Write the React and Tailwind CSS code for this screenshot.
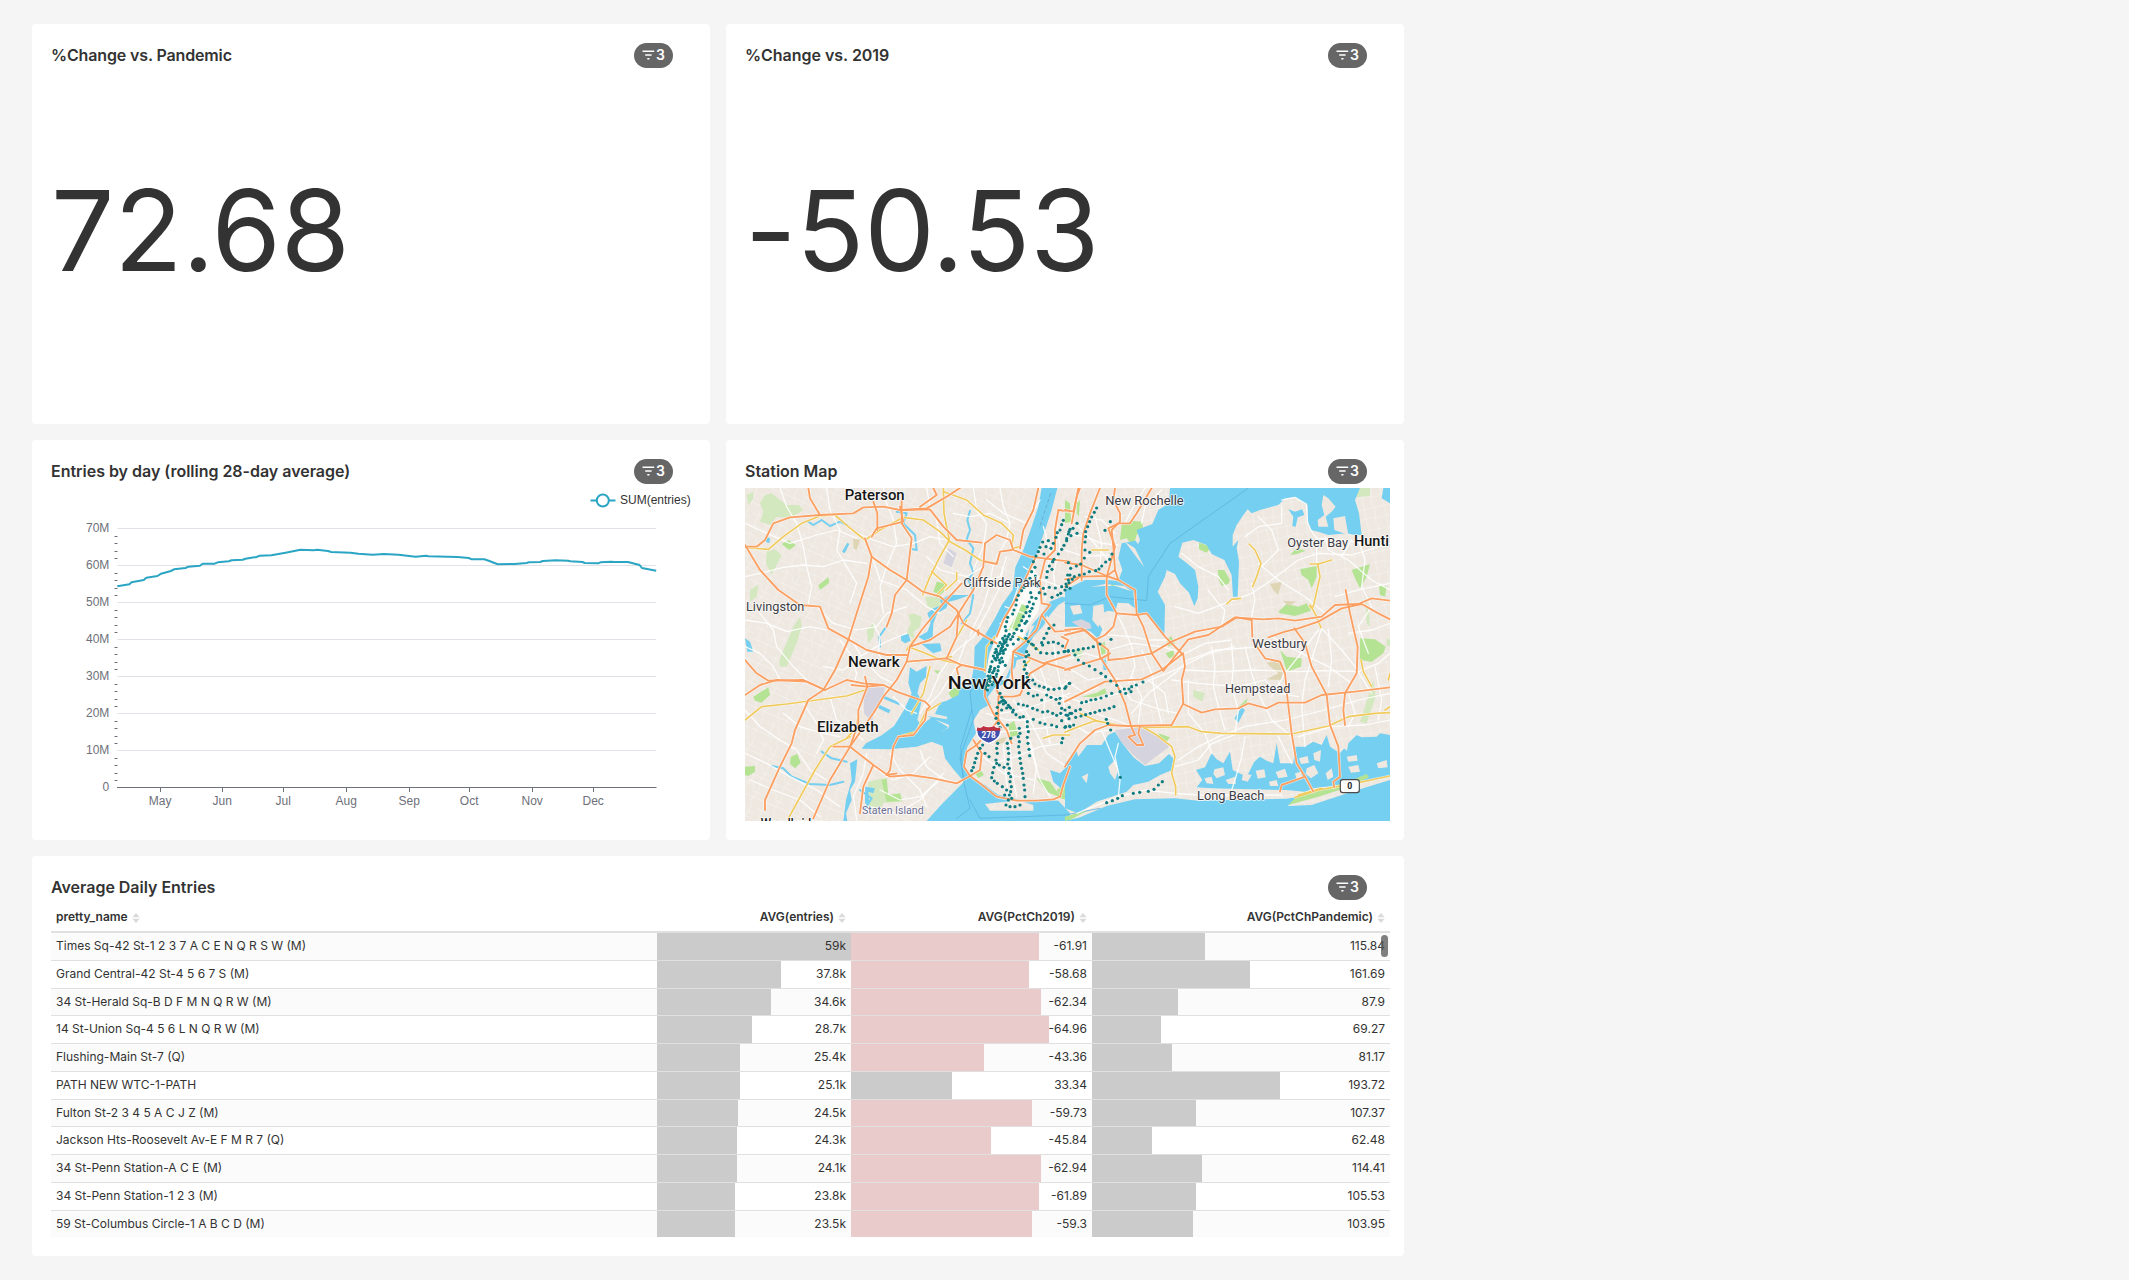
import React from "react";

function FilterBadge() {
  return (
    <div className="flex h-[25px] w-[39px] items-center justify-center rounded-full bg-[#666] pb-[2px] text-[14px] font-semibold leading-none text-white">
      <svg width="13" height="10" viewBox="0 0 13 10" className="mr-px">
        <path d="M0.5 1.3H12.2M3.2 5H9.6M5.3 8.7H7.5" stroke="#fff" strokeWidth="1.4" fill="none" />
      </svg>
      <span>3</span>
    </div>
  );
}

function Card({ title, wide, tight, children }) {
  return (
    <section className={`flex h-[400px] flex-col overflow-hidden rounded bg-white pl-[19px] pr-[14px] pt-[19px] ${wide ? "col-span-2" : ""}`}>
      <header className="mr-[23px] flex h-[25px] shrink-0 items-center justify-between">
        <h2 className={`pb-px text-[16px] font-semibold leading-5 text-[#333] ${tight ? "tracking-[-0.14px]" : "tracking-[-0.02px]"}`}>{title}</h2>
        <FilterBadge />
      </header>
      {children}
    </section>
  );
}

function BigNumber({ value }) {
  return (
    <div className="mt-[94px] whitespace-nowrap text-[112px] leading-[136px] tracking-[-0.2px] text-[#333]">{value}</div>
  );
}

/* ---------- line chart ---------- */

const series = [
  [218, 469], [245, 463], [250, 457], [277, 450], [283, 443], [308, 438], [316, 431], [338, 423], [345, 418], [371, 414],
  [377, 410], [403, 407], [409, 401], [436, 401], [443, 397], [468, 394], [474, 391], [499, 389], [505, 386], [530, 381],
  [537, 377], [563, 376], [595, 368], [628, 359], [658, 361], [665, 359], [690, 363], [697, 366], [740, 368], [758, 371],
  [790, 374], [815, 372], [848, 374], [886, 380], [910, 377], [915, 379], [980, 381], [1005, 384], [1012, 388], [1040, 388],
  [1050, 392], [1070, 403], [1108, 402], [1135, 399], [1140, 397], [1165, 396], [1171, 393], [1200, 391], [1228, 392],
  [1233, 394], [1260, 396], [1265, 399], [1295, 400], [1300, 397], [1325, 395], [1330, 396], [1362, 396], [1388, 405],
  [1393, 414], [1425, 422],
];
const months = [["May", 160.5], ["Jun", 222.5], ["Jul", 283.5], ["Aug", 346.5], ["Sep", 409.5], ["Oct", 469.5], ["Nov", 532.5], ["Dec", 593.5]];

function LineChart() {
  const points = series.map(([x, y]) => `${(20 + x / 2.24).toFixed(1)},${(430 + y / 3).toFixed(1)}`).join(" ");
  return (
    <svg width="645" height="333" viewBox="51 488 645 333" className="mt-1 shrink-0" fontFamily="Liberation Sans, Arial, sans-serif" fontSize="12">
      {[0, 1, 2, 3, 4, 5, 6, 7].map((i) => {
        const y = Math.round(787.3 - i * 37) + 0.5;
        return (
          <g key={i}>
            {i > 0 && <path d={`M117.5 ${y}H656`} stroke="#E0E2E8" />}
            <text x="109.3" y={y + 3.8} textAnchor="end" fill="#6E7079">{i ? `${i}0M` : "0"}</text>
            {i < 7 && [1, 2, 3, 4].map((k) => (
              <path key={k} d={`M114.5 ${Math.round(y - k * 7.4) + 0.5}H117.5`} stroke="#6E7079" />
            ))}
          </g>
        );
      })}
      <path d="M117 787.5H656.5" stroke="#6E7079" />
      {months.map(([m, x]) => (
        <g key={m}>
          <path d={`M${x} 788V792`} stroke="#6E7079" />
          <text x={x - 0.3} y="805" textAnchor="middle" fill="#6E7079">{m}</text>
        </g>
      ))}
      <polyline points={points} fill="none" stroke="#2BA5C4" strokeWidth="2" strokeLinejoin="round" />
      <path d="M590.5 500.5H615.5" stroke="#2BA5C4" strokeWidth="2" />
      <circle cx="602.8" cy="500.5" r="6" fill="#fff" stroke="#2BA5C4" strokeWidth="2" />
      <text x="620" y="504.3" fill="#333">SUM(entries)</text>
    </svg>
  );
}

/* ---------- station map ---------- */

const LAND = "#EEE8E1";
const WATER = "#74CFF0";
const GREEN = "#B4E394";
const PALE = "#D3E8BE";
const AIR = "#D5D4DE";
const SAND = "#DDD5B4";

const westWater = [
  "905,24 952,24 935,90 915,150 885,235 858,300 828,360 792,412 768,470 748,520 738,580 734,630 752,672 720,690 700,722 708,760 682,800 670,850 690,890 735,915 775,945 840,960 735,972 750,992 880,992 880,975 850,965 905,958 955,962 990,1000 990,1023 560,1023 600,978 672,905 642,870 615,835 608,798 575,785 530,800 450,808 365,806 378,790 425,766 462,738 492,690 515,640 505,610 510,562 530,575 560,558 558,592 540,610 532,640 545,662 532,720 545,735 575,712 625,742 628,735 560,708 620,718 622,710 585,702 600,668 620,662 655,645 660,628 692,612 702,560 704,500 735,465 765,415 785,375 818,330 826,262 850,210 875,140 895,80",
  "990,355 955,375 930,405 908,440 880,470 860,505 852,535 830,540 826,560 812,578 800,610 765,622 740,655 736,640 760,605 795,600 812,560 818,520 842,500 852,470 880,430 905,400 930,365 965,350",
  "562,400 580,385 605,375 600,360 628,345 690,345 655,358 628,365 618,385 592,400 580,430 578,470 555,482 535,470 562,455 572,430",
  "482,465 505,462 512,482 495,490 484,482",
  "545,492 600,490 605,512 580,520 560,505",
  "415,640 480,668 478,676 420,652", "412,672 452,690 446,700 410,682",
  "15,475 30,485 40,515 22,515", "78,170 90,175 88,190 78,186",
  "306,215 322,188 328,192 314,220",
  "930,870 940,905 962,925 980,900 990,890 990,850 960,880",
  "330,850 352,838 345,905 330,930 335,960 318,1000 322,1023 310,1023 318,960 335,900",
  "376,920 405,925 400,940 385,935 388,975 375,970", "715,530 738,520 735,560 700,600 690,640 702,670 716,640 720,600",
];
const eastWater = [
  "315,24 885,24 870,60 882,100 890,165 870,165 845,160 790,165 760,155 738,150 728,120 728,75 715,68 690,52 660,55 640,75 585,90 560,100 548,88 535,105 515,135 503,165 503,200 520,180 515,205 522,245 518,350 504,350 500,285 478,240 440,222 425,195 385,180 352,188 340,230 360,245 390,270 400,320 398,355 388,378 372,338 345,310 330,282 305,270 300,290 278,335 300,375 298,470 252,405 215,400 208,340 178,318 120,312 60,325 0,345 0,330 60,300 120,300 160,302 172,270 160,235 170,190 212,182 240,225 232,260 215,200 225,180 215,150 262,132 280,90 312,70",
  "0,338 60,322 120,318 150,318 205,335 210,385 190,370 158,368 150,395 128,392 90,412 112,448 100,478 78,455 40,440 0,440",
  "670,88 690,95 712,88 718,105 698,112 692,140 682,138 685,110",
  "0,850 50,795 110,795 130,765 150,755 172,790 205,832 240,858 282,850 312,822 325,835 322,870 285,885 250,905 205,915 185,935 95,965 40,1000 0,985",
  "45,1012 125,978 210,958 330,955 400,962 665,956 700,950 668,978 740,975 860,935 975,900 975,1023 0,1023",
  "393,870 420,862 440,820 455,838 475,850 495,815 503,870 545,890 568,845 585,830 605,842 625,850 635,790 645,850 685,850 690,800 720,800 745,785 770,795 785,765 795,800 825,820 850,790 875,765 890,772 935,770 945,760 975,765 975,888 890,903 800,918 745,925 720,935 665,930 560,928 440,925 395,922 412,900",
  "955,24 975,24 975,70 950,55",
  "508,715 530,682 540,690 520,728", "112,540 122,530 126,570 116,570",
];
const westLandIslands = ["920,405 935,425 915,425", "870,440 885,435 860,480", "985,380 1020,375 1025,402 1000,405", "600,755 625,745 628,738 615,750"];
const eastLandIslands = [
  "770,75 775,45 790,55 812,80 800,95 782,110 790,140 760,140 758,120 778,105", "805,115 840,108 850,165 808,150", "15,378 45,374 52,400 25,404", "85,378 115,372 118,400 100,442 82,420", "180,185 210,205 238,262 225,245",
  "130,860 150,840 160,870 150,900 135,880", "50,890 70,880 65,910", "30,800 70,790 40,830",
  "448,868 475,862 480,885 455,895 445,882", "482,900 510,890 512,912 490,912", "535,880 560,885 548,905 530,900", "572,872 598,868 602,892 578,896", "632,876 660,866 668,890 640,895",
  "612,905 635,900 640,918 615,918", "702,835 728,828 732,848 708,852", "725,865 748,855 760,880 738,895 722,882", "745,820 768,810 765,845 748,840", "782,880 800,865 805,890 788,900",
  "845,830 875,825 878,842 850,845", "850,860 880,855 885,875 858,878", "935,850 965,840 968,862 940,865", "690,880 708,875 712,895 694,895", "830,800 850,790 846,812", "418,895 440,890 445,912 425,910",
];
const westGreen = [
  ["60,70 75,45 95,40 120,60 140,75 175,75 190,90 150,115 110,110 90,135 60,125 70,95", PALE],
  ["80,215 105,208 125,225 95,285 78,250", PALE], ["125,192 145,180 168,195 148,210", GREEN], ["235,315 265,292 268,308 240,330", GREEN],
  ["118,540 160,440 180,410 185,440 170,490 140,560 120,560", PALE], ["40,650 85,622 90,645 65,668 45,662", GREEN],
  ["580,335 590,305 615,310 612,335 600,345", GREEN], ["555,350 605,350 600,380 565,385", PALE], ["520,400 545,410 540,440 520,455 525,480 500,460 512,430 505,405", PALE],
  ["380,450 405,425 400,470 385,490", PALE], ["625,640 640,625 690,620 640,660", GREEN],
  ["805,735 822,722 835,765 812,772", GREEN], ["385,905 430,895 445,950 480,940 488,965 430,968 418,1000 380,985", PALE], ["15,860 45,858 45,875 25,888 15,885", GREEN],
  ["425,900 440,895 445,945 480,940 486,962 440,965", GREEN],
  ["152,830 172,822 182,848 165,865 150,852", GREEN], ["890,895 930,905 965,955 920,935", GREEN], ["950,930 990,905 990,962 960,955", GREEN],
  ["975,90 990,85 990,120 978,125", GREEN], ["705,880 722,870 732,885 715,895", GREEN], ["340,175 360,180 350,210 340,205", SAND], ["765,780 800,770 790,790 765,792", SAND],
  ["30,330 55,315 50,350 30,365", PALE], ["20,45 40,35 40,55 25,75", PALE], ["582,570 600,572 592,582", GREEN],
  ["610,250 625,205 650,220 635,262", AIR], ["370,640 380,622 435,622 430,650 405,690 395,725 372,700", AIR],
];
const eastGreen = [
  ["170,135 200,122 232,125 235,150 215,165 205,200 185,175 165,180", GREEN], ["0,60 15,70 18,125 0,130", GREEN], ["35,70 45,60 42,110 35,100", GREEN],
  ["402,188 440,200 425,218 402,208", GREEN], ["458,270 478,270 495,300 490,312 470,318 462,300", GREEN], ["640,395 665,372 700,380 725,370 738,392 690,408 645,400", GREEN],
  ["615,312 650,305 640,345 625,330", SAND], ["655,362 695,365 670,378", SAND], ["860,270 915,252 905,290 885,325 870,295", GREEN], ["870,24 915,24 915,48 870,52", PALE],
  ["942,315 965,320 960,350 945,345", GREEN], ["900,350 912,400 915,440 905,430", PALE], ["705,268 755,258 755,290 740,325 730,300 710,285", GREEN], ["675,225 695,205 722,212 695,222", GREEN],
  ["885,475 930,478 962,500 955,520 920,545 885,540", GREEN], ["645,510 665,530 710,535 708,560 665,575 655,540", GREEN], ["605,550 640,538 655,555 650,600 605,598 640,580", SAND],
  ["925,600 932,650 905,730 885,725 900,680", PALE], ["280,760 315,772 305,785 290,780", GREEN], ["385,630 420,640 412,665 385,650", PALE], ["305,480 318,468 330,490 310,500", GREEN],
  ["302,520 325,510 328,530 312,535", GREEN], ["50,650 95,638 120,625 125,640 90,652", GREEN], ["0,905 25,900 38,965 0,970", GREEN], ["128,870 138,840 150,875", PALE],
  ["135,320 145,308 150,325 138,335", GREEN], ["105,492 120,485 122,520 110,525", GREEN], ["20,510 55,505 50,530 28,535", PALE], ["520,680 548,655 545,668 530,680", GREEN],
  ["20,425 50,418 75,430 80,445 55,450", AIR], ["150,750 235,740 290,775 312,800 240,855 205,825 168,785", AIR], ["965,475 975,480 975,500 965,495", PALE],
];
const westWhite = [
  "15,130 80,160 150,190 230,165 290,150 350,175", "15,290 60,280 130,262 190,255 250,260 310,240 380,250", "120,24 140,80 170,130 190,200 200,260 215,320 205,370",
  "260,24 270,90 300,150 290,210 320,260 350,310 330,370", "430,24 440,70 460,120 470,190 440,260 420,320 430,400", "330,150 400,180 460,200 520,190 570,170 620,180",
  "400,240 420,300 500,330 560,380 600,400", "15,420 80,430 140,455 210,440 260,450", "15,500 60,520 100,560 120,600", "60,400 100,450 110,500 160,560 200,600", "230,380 280,430 350,450 410,440 440,400 500,380",
  "330,470 370,540 420,590 460,610", "250,560 310,570 360,530 410,500 450,480 500,460", "400,430 420,470 415,520 440,560", "300,480 330,520 350,580 340,620", "15,690 60,740 120,780 170,810 210,870 260,900",
  "15,820 80,850 150,890 230,930 300,980", "30,900 100,930 180,960 240,1010", "130,700 180,740 250,760 300,770", "190,670 230,730 250,780 230,820", "270,650 290,720 340,760 370,780",
  "380,820 370,880 340,950 350,1020", "400,860 460,900 520,880 570,830", "450,820 480,870 540,930 560,980", "420,930 480,960 540,950 600,900", "390,980 470,1000 540,960 610,880", "540,810 560,860 600,890 640,910",
  "560,24 570,80 590,120 600,190 640,230", "700,24 710,90 740,130 730,200 700,270", "780,24 790,80 810,130 800,180 770,230", "740,60 790,100 860,130 900,60", "640,100 690,110 750,100 810,130", "650,300 690,320 740,300 780,290 800,230",
  "560,230 600,270 680,290 730,260", "760,250 750,310 730,380 700,440 690,470", "790,260 780,320 740,400 700,470", "700,470 640,520 600,580 570,650 540,700", "680,480 650,560 600,640 560,680", "460,650 500,690 530,700",
  "835,320 800,420 775,500", "860,330 820,430 790,520 770,590", "890,350 850,430 820,500 780,570", "780,430 860,470", "795,380 880,410", "770,500 830,530", "850,260 910,300 960,320 990,310", "910,140 930,210 920,290 915,360", "950,120 960,200 940,280 950,350",
  "820,660 850,700 870,800 900,900 930,950", "840,660 880,740 920,820 980,860", "780,700 850,690 930,660 990,640", "740,700 800,720 880,720 990,700", "750,760 840,750 960,740", "760,850 830,830 900,800 970,790", "730,830 790,880 880,900",
  "810,790 815,870 830,950", "790,790 795,860 805,950", "870,780 890,860 880,940", "900,560 920,620 910,700 930,790", "860,560 890,600 950,630 990,600", "940,480 950,560 970,650 980,760", "860,620 920,640 990,670",
];
const eastWhite = [
  "0,160 60,170 110,190 160,195", "0,210 60,230 130,225", "30,130 80,180 130,240", "90,110 110,190 105,260", "60,110 110,120 150,160", "240,24 200,90 180,130", "290,30 240,80 230,130",
  "130,465 200,470 250,480 310,480", "130,510 200,490 290,500 360,520 420,490 500,480", "160,410 180,450 200,500 210,560 190,610", "0,540 60,520 130,540", "20,570 70,600 120,590 180,600", "0,600 60,640 100,620", "0,650 60,670 160,640 230,610 330,570 430,520 510,500",
  "160,610 200,660 290,690 340,700", "200,700 250,640 330,580 370,540 450,510 600,500", "220,730 230,650 200,590", "290,730 270,650 260,580 230,510", "250,600 300,640 310,700", "320,600 400,610 520,620 600,600", "360,570 460,575 560,570 700,575 780,572 880,575",
  "370,600 370,700 420,760 440,820", "440,500 450,560 445,620 460,680 480,750", "500,490 505,560 500,620 520,690 510,760", "540,500 560,580 580,640 620,720 680,770", "600,600 640,640 700,650", "620,470 690,510 790,560 860,610", "760,450 700,530 660,580 620,650", "770,445 720,600 710,680 720,800",
  "770,445 830,510 870,560 920,640", "790,450 800,540 790,620", "430,330 460,370 480,390 470,440", "330,380 400,400 480,370 560,340 620,300 700,240 760,220 860,225 975,190", "560,310 570,360 560,410", "580,250 640,300 720,350 780,400", "650,60 690,52 724,72 728,130 742,158 755,175 755,250", "755,175 830,180 900,190",
  "580,110 620,150 640,210 590,260", "780,170 790,210 850,240 920,300 975,330", "350,220 400,260 460,290 490,330", "650,80 650,130 580,140 540,170", "810,350 880,330 975,310", "880,180 900,240 890,320 920,380 880,440 910,520", "850,460 920,450 975,430", "880,575 940,550 975,520",
  "340,840 400,800 460,770 540,740 660,720 780,690 880,660 975,640", "330,860 400,840 440,790 520,760", "540,770 530,830 510,900 500,930", "700,770 800,740 900,735 975,720", "640,770 680,850", "160,790 150,830 165,900 160,950", "110,750 130,800 155,860", "35,1000 160,950 240,930 330,940 400,945 650,945", "0,720 70,760 130,750", "60,690 150,720 190,735", "850,640 870,700 850,740", "930,560 950,660 940,720", "830,230 860,180",
];
const westYellow = [
  "15,203 85,208 130,170 185,130 240,108 285,105 325,140 375,180 400,235 450,270 500,300", "375,180 420,150 490,112 550,120 600,155 630,185 675,210 720,240 770,250",
  "610,24 612,100 628,180 600,230 570,290 548,345", "612,35 680,60 730,105 785,130 820,165 815,205 840,200", "575,275 620,315 590,345", "650,278 650,300 618,330", "620,535 640,490 680,420", "570,560 550,640 515,700",
  "505,500 545,515 605,540 670,555 735,570", "635,530 560,540 510,545", "15,720 65,680 140,672 230,660 320,648 375,630", "330,770 270,800 225,870 145,1015", "355,700 350,740 320,775", "555,700 530,755 475,770", "765,470 740,500 735,575", "835,470 870,490 895,510", "600,670 560,695", "990,765 940,765 910,775", "870,540 850,560", "520,480 500,510",
];
const eastYellow = [
  "552,192 570,210 588,250 575,290 563,320", "485,372 500,358 527,355", "735,252 760,252 800,240", "758,252 765,290 745,380 735,380", "735,375 750,400 768,443", "80,210 130,210",
  "0,757 40,740 90,722 160,735 235,742 370,740 410,755 470,760 680,762 790,738 850,710 930,700 975,698", "45,700 100,725", "235,742 275,765 320,800 330,830 320,880 332,920 332,945", "888,540 895,575 920,620", "975,580 970,600", "960,690 975,680", "690,952 760,930 870,910 975,888", "700,945 770,925",
];
const westOrange = [
  "15,200 50,200 75,180 100,130 150,112 240,105 340,100 370,82 430,80 480,90 560,85 620,50 660,24", "205,24 210,55 240,105", "15,195 60,270 115,330 180,375 240,380 265,445 325,478 380,510 440,525 500,525",
  "375,175 395,230 385,290 350,400 325,480 285,570 250,630 205,660 165,750 155,790 120,860 75,960 75,990", "15,540 50,580 85,602 190,600 255,630 320,600 370,610 430,615", "15,645 60,615 110,600 200,605 255,630",
  "400,65 412,100 412,150", "480,80 490,125 410,145 395,170", "485,60 485,130 515,175 500,300 465,345 455,400 440,440", "580,24 590,45 540,80", "490,90 570,88 610,140 650,180 725,188",
  "395,230 450,270 500,300 548,335 600,350 650,390 670,430 770,490", "665,310 610,370 545,450 510,500 500,545 470,600 430,650 400,700 330,800 270,900 220,1015", "510,500 570,480 630,440 700,330 730,260 735,190 770,165 810,180 820,210 870,230 990,245",
  "735,245 770,252 780,215 815,210", "500,545 620,535 665,555 735,570", "620,535 650,470 655,400", "665,555 650,565 655,585", "375,590 382,620 355,690 355,730 330,800", "430,615 380,620 335,615", "430,615 470,635 555,665 570,680 560,690 555,720 520,765 475,770 460,800 450,870 440,885",
  "280,800 330,800 400,855 450,890 510,885 580,895 650,910 690,888 720,910 770,950 830,962 890,962 940,958 960,950 970,915 990,860", "400,855 370,920 360,1000", "470,880 440,885",
  "690,888 672,860 680,815 710,795 760,740 775,720 775,650 820,650 840,645 870,580 920,550 990,570", "735,620 735,650 760,700 800,750 815,790", "700,780 725,820 720,870 690,888", "895,24 880,90 850,150 840,205",
  "885,235 850,310 820,370 790,420 770,470", "990,95 955,90 945,150 945,210 915,240 900,300 905,370 930,375 905,405 890,450 850,490 820,515 815,570 820,620", "820,515 860,530 910,550 990,525", "905,405 945,455 990,452", "965,470 985,480 975,505", "715,465 715,450", "780,650 770,630",
];
const eastOrange = [
  "40,24 30,80 20,130", "0,90 25,95 35,50 45,24", "105,24 75,100 55,160 50,210 50,300", "150,24 145,60 165,100 165,125 140,150 145,200 150,270", "260,24 215,100 195,130 160,130 130,145 150,200 125,290",
  "0,248 50,255 125,288 160,300 210,330 215,400", "0,298 50,290 125,288 150,270 160,300", "0,320 40,295", "125,288 125,345 155,400 145,440 120,465 90,480 60,450 0,465", "155,400 215,405 245,400 300,470 355,525 360,560 350,600 355,670 320,735 190,738 130,735",
  "215,400 235,440 260,520 295,573 370,478 430,465 510,412 595,418 640,415 690,422 770,410 810,375 880,372 920,355 975,362", "0,450 50,445 95,480 105,530 150,600 180,670 198,738", "90,480 130,510 130,540 180,535 260,520 320,485 390,455 470,440 515,412 560,420 562,470",
  "0,570 60,550 110,535 135,520", "0,665 60,635 120,605 230,598 290,570 355,520", "562,480 600,535 645,545 660,580 668,660 680,760 695,850 720,890 745,935", "610,472 660,455 700,445 760,425 830,385 890,372 940,400 975,418",
  "688,445 720,490 740,560 785,645 795,735 805,760 820,800 825,890 805,905 808,922", "842,330 855,400 878,500 875,580 840,640 835,690 840,735", "355,672 410,698 450,688 520,685 550,670 605,685 640,668 720,668 770,645 870,635 975,622", "0,860 45,790 90,750 130,735", "198,738 210,765 190,770 215,795 235,795 220,760 225,738", "720,890 650,915 645,935",
];
const westDots = "970,121 965,134 960,150 990,148 985,162 952,158 948,172 980,176 940,190 908,186 925,182 972,196 933,205 900,202 918,200 895,215 965,208 912,222 888,228 955,222 942,238 880,245 938,245 985,248 885,262 928,258 936,268 922,275 875,275 886,288 870,295 990,285 985,300 978,312 920,292 858,300 865,310 852,322 878,312 893,318 910,325 928,322 946,324 965,320 975,330 990,325 845,332 898,338 915,342 936,352 953,345 962,340 835,346 872,338 888,355 875,352 830,360 868,366 828,375 880,372 862,380 876,385 822,390 858,398 870,394 818,402 850,410 868,408 803,412 845,422 860,424 800,425 838,436 855,430 796,440 830,448 845,452 798,452 822,460 795,468 808,463 788,475 800,478 818,470 835,478 755,488 780,488 792,490 775,498 788,500 802,496 820,492 768,508 782,512 796,508 765,518 776,522 790,520 760,528 772,532 785,534 756,545 768,540 780,548 796,556 752,560 764,565 775,560 748,575 758,578 770,582 744,588 756,592 768,590 740,600 750,604 762,605 738,612 745,616 756,614 735,625 742,630 732,615 737,620 740,608 748,596 752,588 750,568 762,572 774,572 788,545 764,535 778,540 770,515 784,505 798,486 792,482 804,470 812,478 786,494 780,520 772,525 790,512 782,600 942,435 927,445 920,460 912,475 905,488 888,506 875,492 865,485 858,475 902,518 920,520 938,520 955,518 972,515 985,512 908,495 925,488 940,486 955,490 968,498 880,495 860,515 858,530 866,525 853,545 857,555 853,568 860,580 862,592 866,604 878,600 885,612 898,618 912,622 925,628 942,628 958,625 978,620 988,610 865,640 880,648 892,645 905,660 920,645 933,652 948,658 960,655 958,670 965,685 975,690 988,682 780,640 785,652 790,660 797,668 805,676 790,672 800,684 812,684 778,668 772,682 785,664 794,664 808,680 785,690 820,690 835,672 850,675 862,678 878,685 892,690 908,696 923,694 938,700 950,706 962,700 978,705 990,700 850,710 840,712 828,704 818,696 862,725 880,718 900,728 915,732 935,735 950,740 965,722 975,742 990,740 968,775 965,788 770,700 768,715 775,730 780,742 802,735 812,775 838,745 840,760 835,770 838,785 836,800 838,818 840,835 842,850 845,865 848,880 850,895 852,915 854,930 855,950 862,740 865,755 862,772 864,790 867,808 869,827 773,790 770,805 772,820 768,840 770,850 762,862 758,878 755,893 763,903 772,910 787,920 800,930 794,945 808,945 802,790 804,805 806,820 805,838 803,852 808,865 806,880 812,890 810,905 814,920 812,935 815,955 805,960 798,975 810,980 825,980 840,975 778,855 792,862 720,805 728,795 713,820 708,835 704,848 700,862 695,872 735,820 747,830";
const eastDots = "95,84 88,97 80,111 74,125 136,125 68,140 120,151 62,155 62,170 60,186 60,210 74,217 58,234 141,222 134,238 122,246 36,130 24,145 12,155 36,160 18,167 5,182 47,252 34,258 17,265 110,258 102,267 92,272 73,275 58,282 43,285 28,290 22,298 8,285 12,308 5,320 138,478 105,492 85,500 70,504 55,506 40,509 25,512 10,514 0,514 30,525 40,540 56,550 73,558 90,569 108,580 122,590 137,603 155,616 234,606 214,615 200,620 192,627 178,627 198,635 182,640 165,635 140,640 124,648 108,654 92,658 78,660 64,665 50,668 14,610 0,625 147,680 133,685 118,690 104,692 90,697 76,700 62,704 48,708 32,712 12,716 46,688 32,692 20,700 8,706 26,735 14,738 2,740 124,718 128,730 137,750 166,892 292,905 280,915 267,928 250,934 224,937 205,940 172,947 158,955 142,962 125,968";

function Shapes({ list, fill }) {
  return list.map((p, i) => <polygon key={i} points={p} fill={fill} />);
}
function Lines({ list, stroke, width, opacity }) {
  return list.map((p, i) => (
    <polyline key={i} points={p} fill="none" stroke={stroke} strokeWidth={width} opacity={opacity} strokeLinejoin="round" strokeLinecap="round" />
  ));
}
function Dots({ list }) {
  return list.split(" ").map((p, i) => {
    const [x, y] = p.split(",");
    return <circle key={i} cx={x} cy={y} r="4.8" fill="#0E7C80" />;
  });
}
function Terrain({ water, islands, green }) {
  return (
    <>
      {green.filter((g) => g[1] !== AIR).map(([p, c], i) => <polygon key={i} points={p} fill={c} />)}
      <Shapes list={water} fill={WATER} />
      <Shapes list={islands} fill={LAND} />
      {green.filter((g) => g[1] === AIR).map(([p, c], i) => <polygon key={i} points={p} fill={c} />)}
    </>
  );
}
function Roads({ white, yellow, orange }) {
  return (
    <>
      <Lines list={white} stroke="#fff" width="3.8" opacity="0.9" />
      <Lines list={yellow} stroke="#fff" width="8" opacity="0.7" />
      <Lines list={yellow} stroke="#F1CA5C" width="5" />
      <Lines list={orange} stroke="#fff" width="9" opacity="0.7" />
      <Lines list={orange} stroke="#FB9F62" width="5.6" />
    </>
  );
}

function Label({ x, y, size, w, bold, color = "#3B3B44", children }) {
  return (
    <text x={x} y={y} fontSize={size} textLength={w} lengthAdjust="spacingAndGlyphs" fontWeight={bold ? 500 : 400} fill={bold ? "#151515" : color}
      stroke="#fff" strokeWidth="5" strokeOpacity="0.8" paintOrder="stroke" strokeLinejoin="round">{children}</text>
  );
}

function StationMap() {
  return (
    <svg width="645" height="333" viewBox="15 24 1935 999" className="mt-1 shrink-0" fontFamily="Roboto, Noto Sans, sans-serif">
      <defs>
        <pattern id="streets" width="74" height="62" patternUnits="userSpaceOnUse" patternTransform="rotate(24)">
          <path d="M0 12H40L46 30H74M20 0V40L34 62M58 0V24L50 62M0 46H74" fill="none" stroke="#fff" strokeWidth="1.6" opacity="0.5" />
        </pattern>
        <pattern id="eastStreets" width="60" height="66" patternUnits="userSpaceOnUse" patternTransform="rotate(-12)">
          <path d="M0 14H60M0 44H36L60 50M14 0V66M44 0V30L38 66" fill="none" stroke="#fff" strokeWidth="1.6" opacity="0.5" />
        </pattern>
      </defs>
      <rect x="15" y="24" width="1935" height="999" fill={LAND} />
      <rect x="15" y="24" width="975" height="999" fill="url(#streets)" />
      <rect x="990" y="24" width="960" height="999" fill="url(#eastStreets)" />
      <Terrain water={westWater} islands={westLandIslands} green={westGreen} />
      <g transform="translate(975 0)">
        <Terrain water={eastWater} islands={eastLandIslands} green={eastGreen} />
        <polygon points="670,975 690,955 760,930 850,905 905,882 912,892 860,918 760,950" fill={GREEN} />
        <polygon points="0,1010 70,990 20,1018 0,1023" fill={GREEN} />
      </g>
      <polygon points="880,262 900,300 900,370 895,395 862,440 850,470 820,505 800,560 780,595 745,612 738,600 745,540 770,470 800,410 850,330" fill="#FBFAF7" />
      <polygon points="805,450 845,372 865,380 830,455" fill={GREEN} />
      <Lines list={["205,125 220,135 245,120 270,138 300,125 320,135", "690,92 682,120 690,150 680,178 700,205 690,250 700,275 685,300 700,330 690,350", "470,95 500,100 490,130 525,165 530,210 518,208", "420,500 418,470 435,445", "95,858 130,865 155,890 210,912 270,915 310,905", "360,930 395,955 375,985", "245,815 275,835 320,845", "700,345 690,400 665,430"]} stroke={WATER} width="6" />
      <Lines list={["672,905 660,830 700,720 690,640 705,590", "650,1015 690,985 670,900 662,800 695,690", "690,960 720,1015 975,1005 1080,985", "975,370 1050,375 1110,350 1220,362 1225,290 1290,190 1525,24"]} stroke="#5AB4DF" width="2.4" />
      <path d="M932 40L898 145" stroke="#6AA9C6" strokeWidth="2.5" strokeDasharray="12 6" />
      <Roads white={westWhite} yellow={westYellow} orange={westOrange} />
      <g transform="translate(975 0)"><Roads white={eastWhite} yellow={eastYellow} orange={eastOrange} /></g>
      <Dots list={westDots} />
      <g transform="translate(975 0)"><Dots list={eastDots} /></g>

      <Label x="314" y="61" size="43" w="180" bold>Paterson</Label>
      <Label x="324" y="560" size="43" w="155" bold>Newark</Label>
      <Label x="231" y="755" size="43" w="185" bold>Elizabeth</Label>
      <Label x="623" y="626" size="55" w="250" bold>New York</Label>
      <Label x="62" y="1046" size="43" w="190" bold>Woodbridge</Label>
      <Label x="1842" y="197" size="43" w="105" bold>Hunti</Label>
      <Label x="18" y="393" size="38" w="175">Livingston</Label>
      <Label x="670" y="320" size="38" w="232">Cliffside Park</Label>
      <Label x="366" y="1002" size="34" w="185" color="#6B6C94">Staten Island</Label>
      <Label x="1096" y="74" size="38" w="235">New Rochelle</Label>
      <Label x="1642" y="200" size="38" w="182">Oyster Bay</Label>
      <Label x="1537" y="503" size="38" w="164">Westbury</Label>
      <Label x="1455" y="638" size="38" w="196">Hempstead</Label>
      <Label x="1371" y="961" size="38" w="202">Long Beach</Label>

      <path d="M712 742Q722 748 730 738Q746 746 762 738Q770 748 780 742Q790 775 746 790Q702 775 712 742Z" fill="#3F50AE" stroke="#fff" strokeWidth="4" />
      <path d="M712 742Q722 748 730 738Q746 746 762 738Q770 748 780 742L782 752H710Z" fill="#BE3140" />
      <text x="746" y="774" textAnchor="middle" fontSize="25" fontWeight="700" fill="#fff">278</text>
      <rect x="1801" y="899" width="57" height="39" rx="8" fill="#fff" stroke="#4b4b4b" strokeWidth="3.5" />
      <text x="1829" y="928" textAnchor="middle" fontSize="26" fontWeight="700" fill="#222">0</text>
    </svg>
  );
}

/* ---------- table ---------- */

const rows = [
  ["Times Sq-42 St-1 2 3 7 A C E N Q R S W (M)", "59k", 194, "-61.91", 188, "115.84", 113, 28],
  ["Grand Central-42 St-4 5 6 7 S (M)", "37.8k", 124, "-58.68", 178, "161.69", 158, 28],
  ["34 St-Herald Sq-B D F M N Q R W (M)", "34.6k", 114, "-62.34", 190, "87.9", 86, 27],
  ["14 St-Union Sq-4 5 6 L N Q R W (M)", "28.7k", 95, "-64.96", 198, "69.27", 69, 28],
  ["Flushing-Main St-7 (Q)", "25.4k", 83, "-43.36", 133, "81.17", 80, 28],
  ["PATH NEW WTC-1-PATH", "25.1k", 83, "33.34", 101, "193.72", 188, 28],
  ["Fulton St-2 3 4 5 A C J Z (M)", "24.5k", 81, "-59.73", 181, "107.37", 104, 27],
  ["Jackson Hts-Roosevelt Av-E F M R 7 (Q)", "24.3k", 80, "-45.84", 140, "62.48", 60, 28],
  ["34 St-Penn Station-A C E (M)", "24.1k", 80, "-62.94", 190, "114.41", 110, 28],
  ["34 St-Penn Station-1 2 3 (M)", "23.8k", 78, "-61.89", 188, "105.53", 104, 28],
  ["59 St-Columbus Circle-1 A B C D (M)", "23.5k", 78, "-59.3", 181, "103.95", 101, 26],
];

function SortIcon() {
  return (
    <svg width="8" height="10" viewBox="0 0 8 10" className="mt-[2px]">
      <path d="M4 0L7.7 4.2H0.3ZM4 10L7.7 5.8H0.3Z" fill="#DADADA" />
    </svg>
  );
}

function BarCell({ value, width }) {
  const color = value.startsWith("-") ? "bg-[#e9cbcb]" : "bg-[#cbcbcb]";
  return (
    <div className="relative flex items-center justify-end pb-px pr-[5px]">
      <div className={`absolute inset-y-0 left-0 ${color}`} style={{ width }} />
      <span className="relative">{value}</span>
    </div>
  );
}

function EntriesTable() {
  return (
    <div className="relative w-[1339px] text-[12px] leading-4 text-[#333]">
      <div className="grid h-[33px] grid-cols-[606px_194px_241px_298px] border-b-2 border-[#e0e0e0] pt-[2px] font-semibold">
        {["pretty_name", "AVG(entries)", "AVG(PctCh2019)", "AVG(PctChPandemic)"].map((h, i) => (
          <div key={h} className={`flex items-center gap-1 ${i ? "justify-end pr-[5px]" : "pl-[5px]"}`}>
            <span>{h}</span>
            <SortIcon />
          </div>
        ))}
      </div>
      {rows.map((r, i) => (
        <div
          key={r[0]}
          className={`grid grid-cols-[606px_194px_241px_298px] ${i % 2 ? "bg-white" : "bg-[#fbfbfb]"} ${i < 10 ? "border-b border-[#e0e0e0]" : ""}`}
          style={{ height: r[7] }}
        >
          <div className="flex items-center pb-px pl-[5px]">{r[0]}</div>
          <BarCell value={r[1]} width={r[2]} />
          <BarCell value={r[3]} width={r[4]} />
          <BarCell value={r[5]} width={r[6]} />
        </div>
      ))}
      <div className="absolute right-[2px] top-[35px] h-[22px] w-[7px] rounded-full bg-[#555]/75" />
    </div>
  );
}

export default function App() {
  return (
    <main className="h-[1280px] w-full overflow-hidden bg-[#f5f5f5] pl-8 pt-6 font-['Inter',sans-serif]">
      <div className="grid w-[1372px] grid-cols-2 gap-4">
        <Card title="%Change vs. Pandemic" tight><BigNumber value="72.68" /></Card>
        <Card title="%Change vs. 2019"><BigNumber value="-50.53" /></Card>
        <Card title="Entries by day (rolling 28-day average)"><LineChart /></Card>
        <Card title="Station Map"><StationMap /></Card>
        <Card title="Average Daily Entries" wide><EntriesTable /></Card>
      </div>
    </main>
  );
}
